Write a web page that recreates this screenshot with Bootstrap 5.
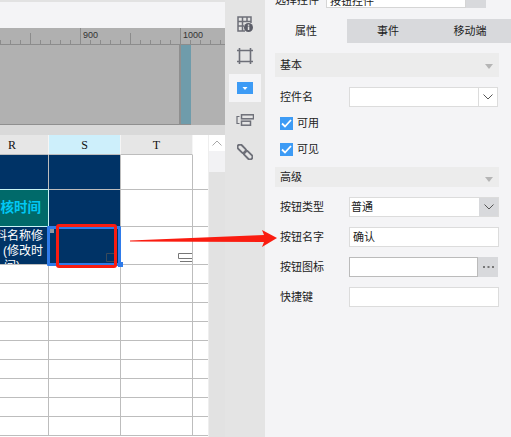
<!DOCTYPE html>
<html lang="zh">
<head>
<meta charset="utf-8">
<title>控件属性</title>
<link href="https://cdn.jsdelivr.net/npm/bootstrap@5.3.0/dist/css/bootstrap.min.css" rel="stylesheet">
<style>
html,body{margin:0;height:437px;overflow:hidden}
body{font-family:"Liberation Sans","Noto Sans CJK SC",sans-serif;font-size:11px;color:#222;background:#f4f4f6}
.stage{position:relative;width:511px;height:437px;overflow:hidden}
.leftpane{width:225px;background:#e4e4e4}
.topstrip{height:2px;background:#e2e2e2}
.toolstrip{height:26px;background:#f4f4f6}
.rulerbar{height:17px;background:#b0b0b0;display:block}
.artboard{height:80px;background:#b1b1b1}
.artspace{width:181px;border-right:2px solid #8f8f8f;border-bottom:1px solid #8f8f8f}
.tealbar{width:10px;background:#6f9cab;border-bottom:1px solid #8f8f8f}
.gapband{height:10px;background:#d9d9d9}
.sheetwrap{height:302px}
.sheetgrid{display:grid;width:208px;grid-template-columns:49px 72px 72px 15px;grid-template-rows:20px 35px 37px 38px repeat(9,19px);background:#fff}
.cellbox{border-right:1px solid #bdbdbd;border-bottom:1px solid #bdbdbd;overflow:hidden}
.headcell{background:#e6e6e6;display:flex;align-items:center;justify-content:center;font-family:"Liberation Serif",serif;font-size:12px;color:#111;border-right-color:#f5f5f5}
.headclip{padding-right:24px}
.headsel{background:#cdeffb}
.headblank{background:#fff;border:0}
.navycell{background:#003366}
.navytop{border-bottom-color:#c9f5f5}
.tealcell{background:#006a6a;color:#00c8f5;font-weight:700;font-size:13.5px;display:flex;align-items:center;justify-content:flex-end;white-space:nowrap;border-right-color:#c9f5f5;border-bottom-color:#c9f5f5;padding-right:7px}
.clipcell{background:#003366;color:#fff;font-size:12px;line-height:15px;white-space:nowrap;padding:2px 5px 0 0;display:flex;flex-direction:column;align-items:flex-end}
.clipshort{margin-right:23px}
.endcell{border-right:0}
.scrolltrack{width:17px;background:#e2e2e2;border-left:1px solid #eee}
.scrollbtn{height:16px;background:#fff;display:flex;align-items:center;justify-content:center}
.scrollthumb{height:21px;background:#f2f2f4}
.iconrail{width:40px;background:#e4e4e4;padding-top:10px;display:flex;flex-direction:column;gap:4px}
.railslot{height:28px;display:flex;align-items:center;justify-content:center;width:32px;margin-left:4px}
.railactive{background:#f4f4f6}
.proppane{width:246px;background:#f4f4f6}
.topfield{height:19px}
.toplabel{width:61px;padding-left:10px;line-height:12px;margin-top:-6px;white-space:nowrap}
.topinput{width:140px;height:8px;background:#fff;border:1px solid #d5d5d5;border-top:0;line-height:3px;padding-left:3px;overflow:hidden;white-space:nowrap}
.topcaret{width:20px;height:8px;background:#d8d9dc}
.tabstrip{height:24px}
.tabitem{width:82px;display:flex;align-items:center;justify-content:center;background:#d8d9dc;color:#222}
.tabactive{background:#f4f4f6}
.sectionbar{margin:10px 12px 0 10px;background:#ececec;display:flex;align-items:center;justify-content:space-between;padding:0 5px}
.sectiontall{height:24px}
.sectionshort{height:20px;margin-top:11px}
.tricaret{width:0;height:0;border-left:4px solid transparent;border-right:4px solid transparent;border-top:5px solid #b5b5b5;margin:2px 1px 0 0}
.caretlow{margin-top:5px}
.proprow{display:flex;align-items:center;height:20px;margin:10px 0 0 15px}
.proplabel{width:69px;flex:none;white-space:nowrap}
.fieldbox{height:20px;background:#fff;border:1px solid #dcdcdc;display:flex;align-items:center;width:150px;padding-left:3px;overflow:hidden}
.fieldgrow{flex:1}
.fieldnarrow{width:149px;padding-right:0}
.fieldselect{padding:0 0 0 1px}
.fieldicon{width:129px;border-color:#bbb}
.chevbox{width:19px;height:18px;display:flex;align-items:center;justify-content:center;border-left:1px solid #dcdcdc}
.chevgray{background:#d8d9dc;border-left:0;height:20px}
.dotsbox{width:20px;height:20px;background:#d8d9dc;display:flex;align-items:center;justify-content:center}
.checkrow{display:flex;align-items:center;height:13px;margin:10px 0 0 15px;gap:4px}
.checknext{margin-top:13px}
.checkmarkbox{width:13px;height:13px;background:#3d9bf5;display:flex;align-items:center;justify-content:center}
.selframe{position:absolute;left:47px;top:226px;width:74px;height:40px;border:3px solid #2f7bea;border-radius:1px}
.selhandle{position:absolute;left:118px;top:262px;width:5px;height:5px;background:#2f7bea}
.selnotch{position:absolute;left:50px;top:229px;width:4px;height:4px;background:#8d97a3}
.redframe{position:absolute;left:56px;top:224px;width:61px;height:44px;border:3px solid #fa1c10;border-radius:3px}
.annot{position:absolute;left:130px;top:228px}
.cmtmark{position:absolute;left:178px;top:253px}
.cmtmarkdark{position:absolute;left:106px;top:253px}
</style>
</head>
<body>
<div class="stage d-flex">
  <div class="leftpane d-flex flex-column flex-shrink-0">
    <div class="topstrip"></div>
    <div class="toolstrip"></div>
    <svg class="rulerbar" width="225" height="17" viewBox="0 0 225 17" aria-hidden="true">
      <path d="M0.5 16V12M10.500 16V12M20.500 16V12M30.500 16V5M40.500 16V12M50.500 16V12M60.500 16V12M70.500 16V12M80.500 16V0M90.500 16V12M100.500 16V12M110.500 16V12M120.500 16V12M130.500 16V5M140.500 16V12M150.500 16V12M160.500 16V12M170.500 16V12M180.500 16V0M190.500 16V12M200.500 16V12M210.500 16V12M220.500 16V12M0 16.500H225" stroke="#8c8c8c" fill="none"/>
      <text x="83" y="10" font-size="9" fill="#333" font-family="Liberation Sans">900</text>
      <text x="183" y="10" font-size="9" fill="#333" font-family="Liberation Sans">1000</text>
    </svg>
    <div class="artboard d-flex">
      <div class="artspace"></div>
      <div class="tealbar"></div>
    </div>
    <div class="gapband"></div>
    <div class="sheetwrap d-flex">
      <div class="sheetgrid">
        <div class="cellbox headcell headclip">R</div><div class="cellbox headcell headsel">S</div><div class="cellbox headcell">T</div><div class="cellbox headblank"></div>
        <div class="cellbox navycell navytop"></div><div class="cellbox navycell"></div><div class="cellbox"></div><div class="cellbox endcell"></div>
        <div class="cellbox tealcell">核时间</div><div class="cellbox navycell"></div><div class="cellbox"></div><div class="cellbox endcell"></div>
        <div class="cellbox clipcell"><span>料名称修</span><span>G (修改时</span><span class="clipshort">间)</span></div><div class="cellbox navycell"></div><div class="cellbox"></div><div class="cellbox endcell"></div>
        <div class="cellbox"></div><div class="cellbox"></div><div class="cellbox"></div><div class="cellbox endcell"></div>
        <div class="cellbox"></div><div class="cellbox"></div><div class="cellbox"></div><div class="cellbox endcell"></div>
        <div class="cellbox"></div><div class="cellbox"></div><div class="cellbox"></div><div class="cellbox endcell"></div>
        <div class="cellbox"></div><div class="cellbox"></div><div class="cellbox"></div><div class="cellbox endcell"></div>
        <div class="cellbox"></div><div class="cellbox"></div><div class="cellbox"></div><div class="cellbox endcell"></div>
        <div class="cellbox"></div><div class="cellbox"></div><div class="cellbox"></div><div class="cellbox endcell"></div>
        <div class="cellbox"></div><div class="cellbox"></div><div class="cellbox"></div><div class="cellbox endcell"></div>
        <div class="cellbox"></div><div class="cellbox"></div><div class="cellbox"></div><div class="cellbox endcell"></div>
        <div class="cellbox"></div><div class="cellbox"></div><div class="cellbox"></div><div class="cellbox endcell"></div>
      </div>
      <div class="scrolltrack">
        <div class="scrollbtn"><svg width="10" height="6" viewBox="0 0 10 6"><path d="M.5 5.500 5 1l4.500 4.500" fill="none" stroke="#a8a8a8"/></svg></div>
        <div class="scrollthumb"></div>
      </div>
    </div>
  </div>

  <div class="iconrail flex-shrink-0">
    <div class="railslot"><svg width="16" height="16" viewBox="0 0 16 16"><path d="M1 8V1h13v6M1 8v7h7M1 5.500h13M1 10h6M5.500 1v14M10 1v5" fill="none" stroke="#6d6f78" stroke-width="1.500"/><circle cx="11.500" cy="11.500" r="4.500" fill="#5c5e68"/><rect x="10.800" y="10.500" width="1.500" height="3.500" fill="#e4e4e4"/><rect x="10.800" y="8.500" width="1.500" height="1.300" fill="#e4e4e4"/></svg></div>
    <div class="railslot"><svg width="16" height="16" viewBox="0 0 16 16"><path d="M2.500 0v16M13.500 0v16M0 2.500h16M0 13.500h16" fill="none" stroke="#6d6f78" stroke-width="1.600"/></svg></div>
    <div class="railslot railactive"><svg width="16" height="12" viewBox="0 0 16 12"><rect width="16" height="12" fill="#3d9bf5"/><path d="M5.500 5h5L8 8z" fill="#fff"/></svg></div>
    <div class="railslot"><svg width="18" height="12" viewBox="0 0 18 12"><path d="M3.500 2.500H1v7h2.500" fill="none" stroke="#6d6f78" stroke-width="1.200"/><rect x="5.500" y=".8" width="12" height="4" fill="none" stroke="#6d6f78" stroke-width="1.500"/><rect x="5.500" y="7.200" width="9" height="4" fill="none" stroke="#6d6f78" stroke-width="1.500"/></svg></div>
    <div class="railslot"><svg width="16" height="16" viewBox="0 0 16 16"><g transform="rotate(45 8 8)" fill="none" stroke="#6d6f78" stroke-width="1.900"><rect x="-1.500" y="5.500" width="10" height="5" rx="2.500"/><rect x="7.500" y="5.500" width="10" height="5" rx="2.500"/></g></svg></div>
  </div>

  <div class="proppane flex-shrink-0">
    <div class="topfield d-flex">
      <div class="toplabel">选择控件</div>
      <div class="topinput">按钮控件</div>
      <div class="topcaret"></div>
    </div>
    <div class="tabstrip d-flex">
      <div class="tabitem tabactive">属性</div>
      <div class="tabitem">事件</div>
      <div class="tabitem">移动端</div>
    </div>
    <div class="sectionbar sectiontall">基本<span class="tricaret"></span></div>
    <div class="proprow"><span class="proplabel">控件名</span>
      <div class="fieldbox fieldnarrow"><span class="fieldgrow"></span><span class="chevbox"><svg width="10" height="6" viewBox="0 0 10 6"><path d="M.5.500 5 5 9.500.5" fill="none" stroke="#555"/></svg></span></div>
    </div>
    <div class="checkrow"><span class="checkmarkbox"><svg width="11" height="9" viewBox="0 0 11 9"><path d="M1 4.500 4 7.500 10 1" fill="none" stroke="#fff" stroke-width="1.800"/></svg></span>可用</div>
    <div class="checkrow checknext"><span class="checkmarkbox"><svg width="11" height="9" viewBox="0 0 11 9"><path d="M1 4.500 4 7.500 10 1" fill="none" stroke="#fff" stroke-width="1.800"/></svg></span>可见</div>
    <div class="sectionbar sectionshort">高级<span class="tricaret caretlow"></span></div>
    <div class="proprow"><span class="proplabel">按钮类型</span>
      <div class="fieldbox fieldselect"><span class="fieldgrow">普通</span><span class="chevbox chevgray"><svg width="10" height="6" viewBox="0 0 10 6"><path d="M.5.500 5 5 9.500.5" fill="none" stroke="#555"/></svg></span></div>
    </div>
    <div class="proprow"><span class="proplabel">按钮名字</span><div class="fieldbox">确认</div></div>
    <div class="proprow"><span class="proplabel">按钮图标</span><div class="fieldbox fieldicon"></div><div class="dotsbox"><svg width="11" height="3" viewBox="0 0 11 3"><path d="M0 0h2v2H0zM4.500 0h2v2h-2zM9 0h2v2H9z" fill="#777"/></svg></div></div>
    <div class="proprow"><span class="proplabel">快捷键</span><div class="fieldbox"></div></div>
  </div>

  <svg class="cmtmark" width="14" height="10" viewBox="0 0 14 10"><path d="M.5.500h13.500M.500.500v5h13.500M2 8.500h12" fill="none" stroke="#777"/></svg>
  <svg class="cmtmarkdark" width="10" height="10" viewBox="0 0 10 10"><path d="M.5.500h8v8h-8z" fill="none" stroke="#3a4a5a"/></svg>
  <div class="selframe"></div>
  <div class="selhandle"></div>
  <div class="selnotch"></div>
  <div class="redframe"></div>
  <svg class="annot" width="150" height="24" viewBox="0 0 150 24"><path d="M0 12.500 134 7 132 2 147 10 132 19 134 14 0 13.500z" fill="#fa1c10"/></svg>
</div>
</body>
</html>
